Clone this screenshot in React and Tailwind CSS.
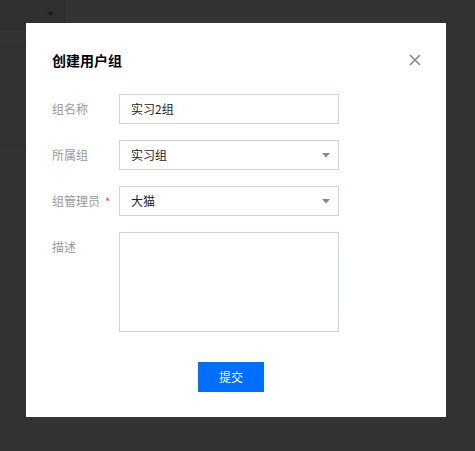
import React from 'react';

const font = { fontFamily: '"Noto Sans CJK SC", "Noto Sans", sans-serif' };

const Caret = () => (
    <svg width="8" height="5" viewBox="0 0 8 5" className="shrink-0">
        <path d="M0 0 L8 0 L4 4.5 Z" fill="#888" />
    </svg>
);

const Row = ({ label, required, children }) => (
    <div className="flex items-start">
        <div className="w-[67px] shrink-0 leading-[30px] text-[12px] text-[#999] flex items-center">
            {label}
            {required && <span className="text-[#e54545] ml-[5px] text-[11px]">*</span>}
        </div>
        {children}
    </div>
);

const App = () => {
    return (
        <div className="relative w-[475px] h-[451px] bg-[#333333] overflow-hidden" style={font}>
            {/* 뒤쪽 테이블 (오버레이에 가려짐) */}
            <div className="flex flex-col w-[65px]">
                <div className="h-[30px] border-b border-r border-[#2b2b2b] bg-[#303030] flex items-center justify-end pr-[10px]">
                    <svg width="7" height="5" viewBox="0 0 7 5">
                        <path d="M0 0 L7 0 L3.5 4 Z" fill="#1c1c1c" />
                    </svg>
                </div>
                <div className="h-[17px] border-b border-[#2b2b2b]" />
                <div className="h-[99px] border-b border-[#2b2b2b]" />
            </div>

            {/* 모달 */}
            <div className="absolute left-[26px] top-[23px] w-[420px] h-[394px] bg-white px-[26px] pt-[27px]">
                <div className="flex items-center justify-between h-[20px]">
                    <h1 className="text-[14px] font-bold text-[#000]">创建用户组</h1>
                    <svg width="12" height="12" viewBox="0 0 12 12" className="mr-[-1px]">
                        <path d="M1 1 L11 11 M11 1 L1 11" stroke="#888" strokeWidth="1.6" />
                    </svg>
                </div>

                <div className="flex flex-col gap-[16px] mt-[24px]">
                    <Row label="组名称">
                        <div className="w-[220px] h-[30px] border border-[#cfd4dc] px-[11px] flex items-center text-[12px] text-[#222]">
                            实习2组
                        </div>
                    </Row>
                    <Row label="所属组">
                        <div className="w-[220px] h-[30px] border border-[#cfd4dc] pl-[11px] pr-[8px] flex items-center justify-between text-[12px] text-[#222]">
                            <span>实习组</span>
                            <Caret />
                        </div>
                    </Row>
                    <Row label="组管理员" required>
                        <div className="w-[220px] h-[30px] border border-[#cfd4dc] pl-[11px] pr-[8px] flex items-center justify-between text-[12px] text-[#222]">
                            <span>大猫</span>
                            <Caret />
                        </div>
                    </Row>
                    <Row label="描述">
                        <div className="w-[220px] h-[100px] border border-[#cfd4dc]" />
                    </Row>
                </div>

                <div className="flex justify-center mt-[30px] pr-[10px]">
                    <button className="w-[66px] h-[30px] bg-[#006eff] text-white text-[12px]">提交</button>
                </div>
            </div>
        </div>
    );
};

export default App;
